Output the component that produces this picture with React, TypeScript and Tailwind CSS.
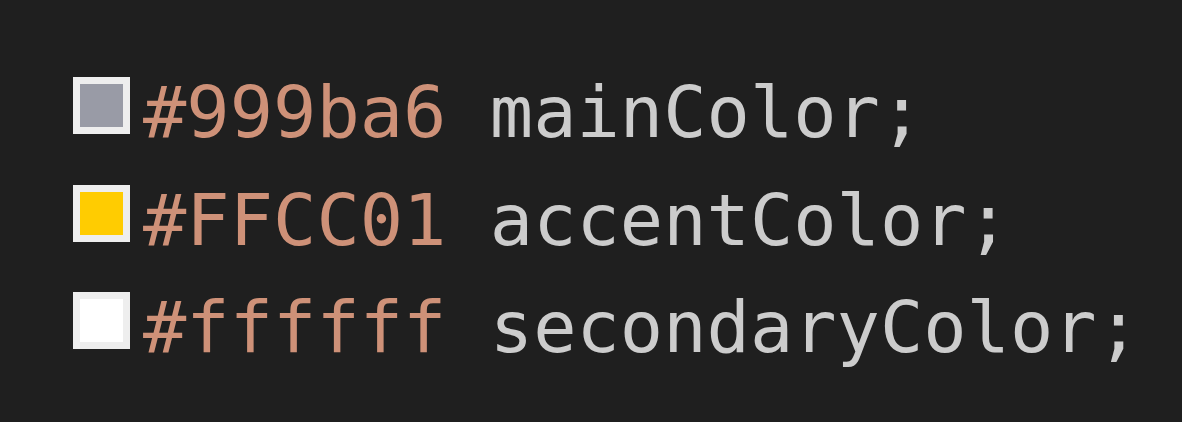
import React from "react";

type Row = {
    swatch: string,
    hex: string,
    name: string,
};

const rows: Row[] = [
    { swatch: "bg-[#999ba6]", hex: "#999ba6", name: "mainColor;" },
    { swatch: "bg-[#FFCC01]", hex: "#FFCC01", name: "accentColor;" },
    { swatch: "bg-[#ffffff]", hex: "#ffffff", name: "secondaryColor;" },
];

function Swatch({ color }: { color: string }) {
    return (
        <div className="w-[57px] h-[57px] shrink-0 border-[7px] border-[#eeeeee] mt-[18px] mr-[13px]">
            <div className={`w-full h-full ${color}`} />
        </div>
    );
}

export default function App() {
    return (
        <div className="w-[1182px] h-[422px] bg-[#1f1f1f] overflow-hidden pt-[59px] pl-[73px] font-['DejaVu_Sans_Mono',monospace] text-[72px] leading-[107.5px]">
            {rows.map((row) => (
                <div key={row.hex} className="flex items-start whitespace-pre">
                    <Swatch color={row.swatch} />
                    <span className="text-[#ce9178]">{row.hex}</span>
                    <span className="text-[#cccccc]"> {row.name}</span>
                </div>
            ))}
        </div>
    );
}
